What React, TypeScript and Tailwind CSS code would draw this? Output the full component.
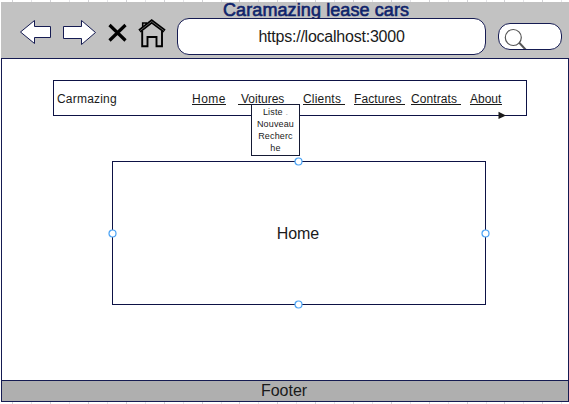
import React from "react";

const links = [
  { label: "Home", box: "ml-[75px] w-[34px]", tracking: "tracking-[0.5px]" },
  { label: "Voitures", box: "ml-[12px] w-[47px] pl-[3px]", tracking: "tracking-[0px]" },
  { label: "Clients", box: "ml-[18px] w-[42px]", tracking: "tracking-[0.2px]" },
  { label: "Factures", box: "ml-[9px] w-[51px]", tracking: "tracking-[0.1px]" },
  { label: "Contrats", box: "ml-[6px] w-[50px]", tracking: "tracking-[0.1px]" },
  { label: "About", box: "ml-[9px] w-[32px]", tracking: "tracking-[0px]" },
];

function Ticks({ className }: { className: string }) {
  return (
    <svg width="569" height="2" className={"block " + className}>
      {Array.from({ length: 30 }, (_, i) => (
        <rect key={i} x={Math.round(12.3 + i * 18.93)} y="0" width="1" height="2" fill={i % 2 ? "#e4e4e8" : "#d2d2d6"} />
      ))}
    </svg>
  );
}

function Handle({ className }: { className: string }) {
  return (
    <svg width="9" height="9" className={"absolute " + className}>
      <circle cx="4.5" cy="4.5" r="3.5" fill="#fff" stroke="#4ba3f5" strokeWidth="1.2" />
    </svg>
  );
}

function Toolbar() {
  return (
    <header className="ml-px h-14 bg-[#c2c2c2]">
      <h1 className="flex h-4 items-center pl-[222px] text-[18px] leading-4 tracking-[0.1px] whitespace-nowrap text-[#10246b] [-webkit-text-stroke:0.6px_#10246b]">
        Caramazing lease cars
      </h1>
      <div className="flex h-[37px]">
        <svg width="176" height="37" viewBox="1 18 176 37" className="shrink-0">
          <g fill="#fff" stroke="#151b52" strokeWidth="1">
            <path d="M20.5 32 34.5 20.5V26.5H50.5V37.5H34.5V43.5Z" />
            <path d="M63.5 26.5H81.5V20.5L95.5 32.5 81.5 44.5V38.5H63.5Z" />
          </g>
          <path d="M109.5 25 125.5 40.5M125.5 25 109.5 40.5" stroke="#000" strokeWidth="3.2" />
          <g fill="none" stroke="#000">
            <path d="M142.2 31V46.2H147.5V37H156.5V46.2H162V31" strokeWidth="1.9" />
            <path d="M142.7 28V23H146.2V25" strokeWidth="1.6" />
            <path d="M139.5 31 151.7 21.5 164.5 31" strokeWidth="3.8" />
            <path d="M140.2 30.5 151.7 21.5 163.8 30.5" stroke="#777" strokeWidth="0.8" />
          </g>
        </svg>
        <div className="flex h-[37px] w-[309px] items-center justify-center rounded-[12px] border border-[#151b52] bg-white text-[16px] tracking-[-0.23px]">
          https://localhost:3000
        </div>
        <div className="mt-[5px] ml-[12px] h-[27px] w-[64px] overflow-hidden rounded-[12px] border border-[#151b52] bg-white">
          <svg width="62" height="25" viewBox="499 24 62 25" fill="none" stroke="#555">
            <circle cx="513.3" cy="37.5" r="8" strokeWidth="1.2" />
            <path d="M519 42.5 526 50" strokeWidth="2" />
          </svg>
        </div>
      </div>
    </header>
  );
}

function Navigation() {
  return (
    <nav className="relative mt-[21px] ml-[51px] flex h-[36px] w-[474px] items-center border border-[#0d1245] text-[12px]">
      <span className="w-[63px] pt-[2px] pl-[3px] tracking-[0.2px]">Carmazing</span>
      {links.map((link) => (
        <a key={link.label} className={"h-[14px] shrink-0 border-b border-[#1a1a1a] leading-[16px] whitespace-nowrap " + link.box + " " + link.tracking}>
          {link.label}
        </a>
      ))}
      <svg width="8" height="8" className="absolute top-[30px] left-[444px]">
        <path d="M0.5 0.8 8 4.5 0.5 8Z" fill="#1a1a1a" />
      </svg>
      <ul className="absolute top-[23px] left-[197px] h-[52px] w-[49px] border border-[#151a35] bg-white pt-px text-center text-[9px] leading-[12px] tracking-[0.15px]">
        <li>Liste <span className="text-[#aaa]">.</span></li>
        <li>Nouveau</li>
        <li>Recherc</li>
        <li>he</li>
      </ul>
    </nav>
  );
}

export default function App() {
  return (
    <div className="flex h-[404px] w-[569px] flex-col overflow-hidden bg-white font-['Liberation_Sans',Arial,sans-serif] text-[#1a1a1a]">
      <Ticks className="shrink-0" />
      <Toolbar />
      <main className="ml-px h-[322px] border-x border-t border-[#151b52]">
        <Navigation />
        <section className="relative mt-[45px] ml-[110px] flex h-[144px] w-[374px] items-center justify-center border border-[#0d1245] pt-[2px] pr-[2px] text-[16px] tracking-[-0.1px]">
          Home
          <Handle className="-top-[5px] left-[181px]" />
          <Handle className="-bottom-[5px] left-[181px]" />
          <Handle className="top-[67px] -left-[5px]" />
          <Handle className="top-[67px] -right-[5px]" />
        </section>
      </main>
      <footer className="ml-px flex h-[22px] items-center justify-center border border-[#151b52] bg-[#afafaf] pr-[2px] text-[16px] leading-5">
        Footer
      </footer>
      <Ticks className="shrink-0" />
    </div>
  );
}
